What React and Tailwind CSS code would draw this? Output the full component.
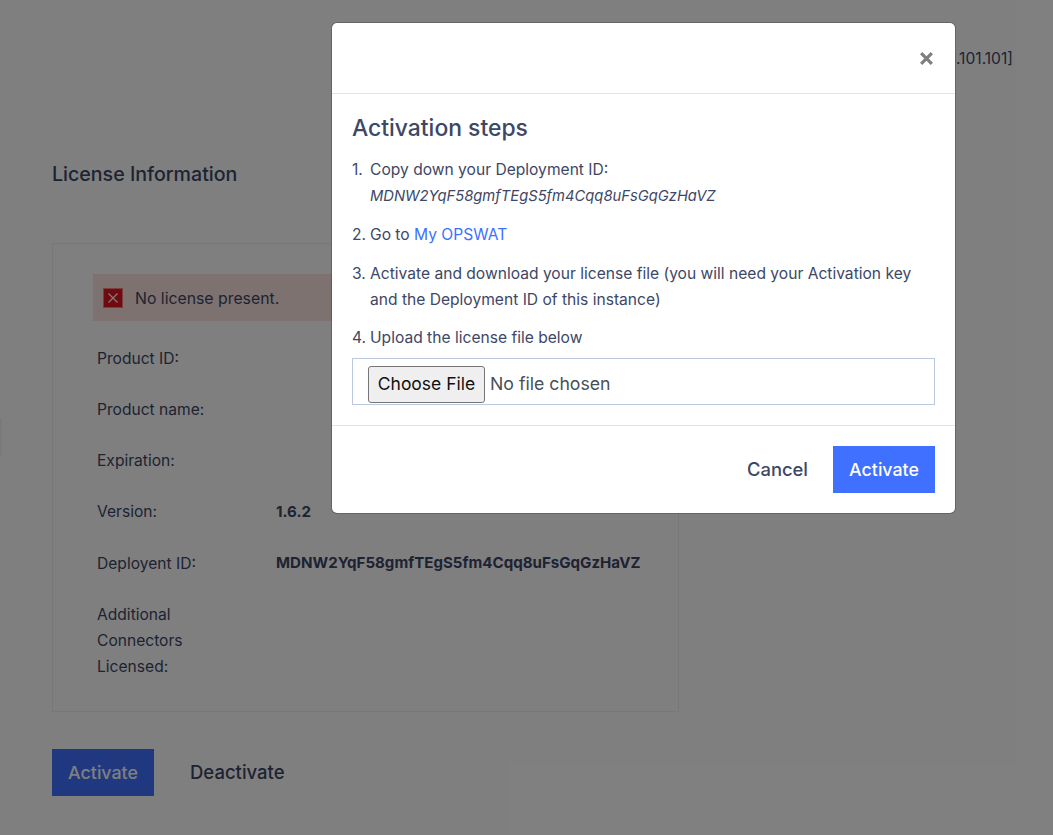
import React from 'react';

const ROWS = [
    { label: 'Product ID:', value: '' },
    { label: 'Product name:', value: '' },
    { label: 'Expiration:', value: '' },
    { label: 'Version:', value: '1.6.2' },
    { label: 'Deployent ID:', value: 'MDNW2YqF58gmfTEgS5fm4Cqq8uFsGqGzHaVZ' },
];

const App = () => {
    return (
        <div className="relative h-[835px] w-[1053px] overflow-hidden bg-white font-['Inter',sans-serif] text-[15.6px] text-[#3d4766]">
            {/* page under the overlay */}
            <div className="flex h-full flex-col pl-[52px] pr-[40px] pt-[47px]">
                <div className="h-[24px] text-right leading-[24px]">[101.101.101.101]</div>
                <h2 className="mt-[91px] text-[19.6px] font-medium leading-[24px]">License Information</h2>
                <div className="mt-[57px] h-[469px] w-[627px] border border-[#f0f0f0] pl-[40px] pr-[39px] pt-[30px]">
                    <div className="flex h-[47px] items-center gap-[12px] bg-[#fbe5e0] pl-[10px]">
                        <span className="flex h-[20px] w-[20px] items-center justify-center border border-[#f08080] bg-[#e0141c] text-white">
                            <svg width="12" height="12" viewBox="0 0 12 12" fill="none" stroke="currentColor" strokeWidth="1.2">
                                <path d="M1.5 1.5l9 9M10.5 1.5l-9 9" />
                            </svg>
                        </span>
                        <span className="pt-[2px] text-[15.8px]">No license present.</span>
                    </div>
                    <div className="mt-[12px] flex flex-col pl-[4px]">
                        {ROWS.map(row => (
                            <div key={row.label} className="flex h-[51.2px] items-center">
                                <div className="w-[179px] shrink-0">{row.label}</div>
                                <div className="text-[15.1px] font-bold">{row.value}</div>
                            </div>
                        ))}
                        <div className="mt-[12.6px] w-[120px] leading-[26px]">Additional Connectors Licensed:</div>
                    </div>
                </div>
                <div className="mt-[37px] flex items-center gap-[36px]">
                    <button className="h-[47px] w-[102px] bg-[#4070ff] pt-px text-[17.8px] font-medium text-white">Activate</button>
                    <button className="text-[18.5px] font-medium">Deactivate</button>
                </div>
            </div>

            <div className="absolute left-0 top-[418px] h-[38px] w-[2px] bg-[#f4f4f4]"></div>

            {/* overlay */}
            <div className="absolute inset-0 bg-black/50"></div>

            {/* modal */}
            <div className="absolute left-[331px] top-[22px] w-[625px] rounded-[6px] border border-black/20 bg-white bg-clip-padding">
                <div className="flex h-[71px] items-start justify-end border-b border-[#e3e3e3] pr-[21px] pt-[28px]">
                    <svg width="15" height="15" viewBox="0 0 14 14" fill="none" stroke="#7f7f7f" strokeWidth="3">
                        <path d="M2 2l10 10M12 2L2 12" />
                    </svg>
                </div>
                <div className="border-b border-[#e3e3e3] px-[20px] pb-[20px] pt-[21px]">
                    <h3 className="text-[22.9px] font-medium leading-[27px]">Activation steps</h3>
                    <ol className="mt-[15px] leading-[26px]">
                        <li className="flex">
                            <span className="w-[18px]">1.</span>
                            <span>
                                Copy down your Deployment ID:
                                <br />
                                <em className="text-[14.75px]">MDNW2YqF58gmfTEgS5fm4Cqq8uFsGqGzHaVZ</em>
                            </span>
                        </li>
                        <li className="mt-[13px] flex">
                            <span className="w-[18px]">2.</span>
                            <span>Go to <a className="text-[#4070ff]">My OPSWAT</a></span>
                        </li>
                        <li className="mt-[13px] flex">
                            <span className="w-[18px]">3.</span>
                            <span className="w-[560px]">Activate and download your license file (you will need your Activation key and the Deployment ID of this instance)</span>
                        </li>
                        <li className="mt-[12px] flex">
                            <span className="w-[18px]">4.</span>
                            <span>Upload the license file below</span>
                        </li>
                    </ol>
                    <div className="mt-[7px] flex h-[47px] items-start gap-[5px] border border-[#bcc7e0] pl-[15px] pt-[7px] text-[#495057]">
                        <span className="flex h-[37px] w-[117px] items-center justify-center rounded-[3px] border border-[#767676] bg-[#efefef] text-[17.5px] text-[#111]">Choose File</span>
                        <span className="text-[17.7px] leading-[35px]">No file chosen</span>
                    </div>
                </div>
                <div className="flex h-[87px] items-center justify-end gap-[25px] pr-[20px]">
                    <button className="text-[18.4px] font-medium">Cancel</button>
                    <button className="h-[47px] w-[102px] bg-[#4070ff] pt-px text-[17.8px] font-medium text-white">Activate</button>
                </div>
            </div>
        </div>
    );
};

export default App;
